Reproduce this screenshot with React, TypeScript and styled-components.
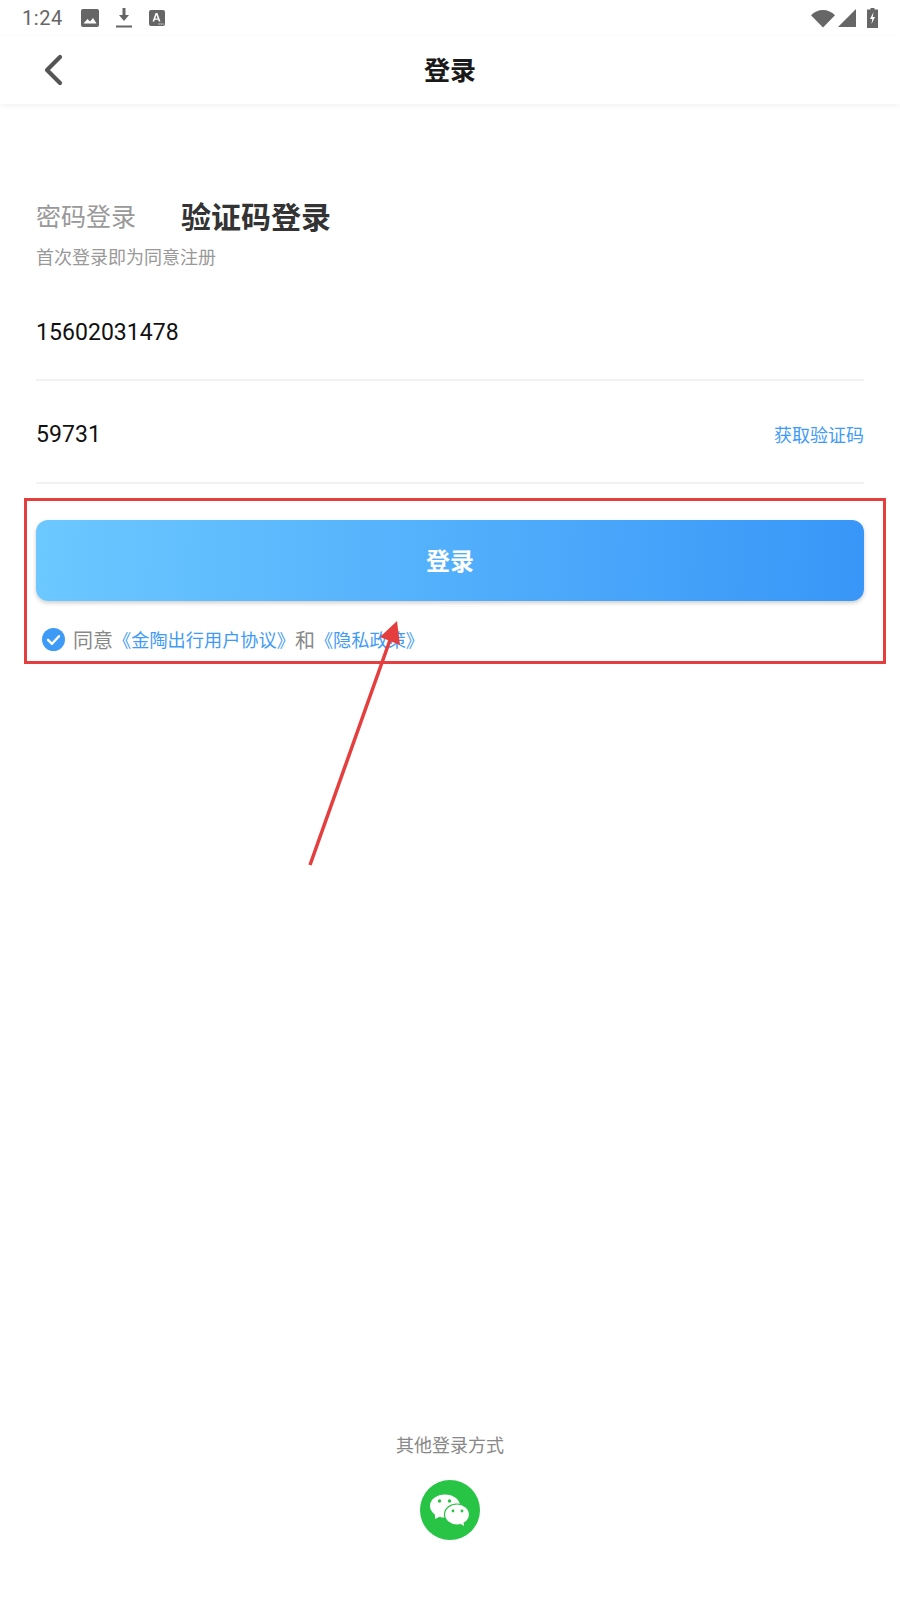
import styled, { createGlobalStyle } from 'styled-components';

const GlobalStyle = createGlobalStyle`
  html, body {
    margin: 0;
    padding: 0;
    background: #fff;
  }
  * {
    box-sizing: border-box;
  }
`;

const cjk = `Roboto, "Noto Sans CJK SC", sans-serif`;
const annotationRed = '#e53e3e';

const Page = styled.div`
  position: relative;
  width: 900px;
  height: 1600px;
  display: flex;
  flex-direction: column;
  overflow: hidden;
  background: #fff;
  font-family: ${cjk};
`;

const StatusBar = styled.div`
  height: 36px;
  padding: 0 22px;
  display: flex;
  align-items: center;
  color: #666;
`;

const Time = styled.span`
  font-size: 20px;
  letter-spacing: 0.6px;
  width: 59px;
`;

const StatusIcons = styled.div<{ $gap: number }>`
  display: flex;
  align-items: center;
  gap: ${(p) => p.$gap}px;
`;

const BatteryIcon = styled.svg`
  margin-left: 8px;
`;

const Spacer = styled.div`
  flex: 1;
`;

const NavBar = styled.header`
  height: 68px;
  padding-bottom: 3px;
  position: relative;
  display: flex;
  align-items: center;
  justify-content: center;
  box-shadow: 0 2px 6px rgba(0, 0, 0, 0.05);
`;

const BackButton = styled.button`
  position: absolute;
  left: 40px;
  top: 17px;
  padding: 0;
  border: 0;
  background: none;
  display: flex;
`;

const NavTitle = styled.h1`
  margin: 0;
  font-size: 26px;
  font-weight: 700;
  color: #1a1a1a;
`;

const Content = styled.main`
  flex: 1;
  padding: 93px 36px 0;
  display: flex;
  flex-direction: column;
`;

const Tabs = styled.div`
  display: flex;
  align-items: center;
  height: 36px;
  gap: 45px;
`;

const Tab = styled.span<{ $active?: boolean }>`
  font-size: ${(p) => (p.$active ? 30 : 25)}px;
  font-weight: ${(p) => (p.$active ? 700 : 400)};
  color: ${(p) => (p.$active ? '#333' : '#999')};
`;

const Hint = styled.p`
  margin: 12px 0 0;
  font-size: 18px;
  line-height: 26px;
  color: #999;
`;

const Field = styled.div`
  height: 103px;
  display: flex;
  align-items: center;
  justify-content: space-between;
  border-bottom: 2px solid #f2f2f2;
  padding-top: 4px;
`;

const FirstField = styled(Field)`
  margin-top: 10px;
  height: 100px;
  padding-top: 3px;
`;

const FieldValue = styled.span`
  font-size: 23px;
  letter-spacing: 0.05px;
  margin-top: 2px;
  color: #111;
`;

const CodeLink = styled.a`
  font-size: 18px;
  color: #3f9bf7;
`;

const SubmitButton = styled.button`
  margin-top: 36px;
  height: 81px;
  padding: 0 0 2px;
  border: 0;
  border-radius: 12px;
  background: linear-gradient(92deg, #6cc8ff 0%, #3896f8 100%);
  box-shadow: 0 2px 4px rgba(0, 0, 0, 0.2);
  color: #fff;
  font-family: inherit;
  font-size: 24px;
  font-weight: 700;
`;

const Agreement = styled.div`
  margin-top: 23px;
  padding-left: 6px;
  height: 30px;
  display: flex;
  align-items: center;
  font-size: 20px;
  color: #888;
`;

const CheckIcon = styled.svg`
  margin-right: 8px;
  flex: none;
`;

const PolicyLink = styled.a`
  font-size: 18.2px;
  color: #3f9bf7;
`;

const Footer = styled.footer`
  height: 167px;
  display: flex;
  flex-direction: column;
  align-items: center;
`;

const FooterLabel = styled.span`
  font-size: 18px;
  line-height: 26px;
  color: #888;
`;

const WechatButton = styled.button`
  margin-top: 21px;
  width: 60px;
  height: 60px;
  padding: 0;
  border: 0;
  border-radius: 50%;
  background: #28c445;
  display: flex;
`;

// annotation drawn on top of the screenshot
const HighlightBox = styled.div`
  position: absolute;
  left: 24px;
  top: 498px;
  width: 862px;
  height: 166px;
  border: 3px solid ${annotationRed};
  pointer-events: none;
`;

const Arrow = styled.svg`
  position: absolute;
  left: 0;
  top: 0;
  pointer-events: none;
`;

export default function App() {
  return (
    <Page>
      <GlobalStyle />
      <StatusBar>
        <Time>1:24</Time>
        <StatusIcons $gap={17}>
          <svg width="18" height="18" viewBox="0 0 18 18">
            <rect width="18" height="18" rx="2" fill="#666" />
            <path d="M2.5 14.5 6.5 10l2.5 2.5L12 9l3.5 5.5Z" fill="#fff" />
          </svg>
          <svg width="16" height="20" viewBox="0 0 16 20">
            <path d="M6.5 0h3v7H13l-5 6-5-6h3.5Z" fill="#666" />
            <rect y="17.5" width="16" height="2" fill="#666" />
          </svg>
          <svg width="16" height="16" viewBox="0 0 16 16">
            <rect width="16" height="16" rx="2" fill="#666" />
            <path d="M3.5 11.5 6.6 3h1.800l3.100 8.500H9.800l-.6-1.800H5.800l-.6 1.800Zm2.800-3.100h2.400L7.500 5Z" fill="#fff" />
            <path d="M9.500 13.500h1.200v1H9.500Zm2 0h1.200v1h-1.200Zm2 0h1v1h-1Z" fill="#fff" />
          </svg>
        </StatusIcons>
        <Spacer />
        <StatusIcons $gap={3}>
          <svg width="24" height="19" viewBox="0 0 24 19">
            <path d="M0 6.200C3.200 3 7.400 1 12 1s8.800 2 12 5.200L12 18.500Z" fill="#666" />
          </svg>
          <svg width="18" height="18" viewBox="0 0 18 18">
            <path d="M0 18 18 0v18Z" fill="#666" />
          </svg>
          <BatteryIcon width="11" height="20" viewBox="0 0 11 20">
            <path d="M3.500 0h4v1.500H11V20H0V1.500h3.500Z" fill="#666" />
            <path d="M6.500 4 3 11h2.300l-.8 5L8 9H5.700Z" fill="#fff" />
          </BatteryIcon>
        </StatusIcons>
      </StatusBar>

      <NavBar>
        <BackButton aria-label="返回">
          <svg width="26" height="34" viewBox="0 0 26 34">
            <path d="M20 4 7 17l13 13" fill="none" stroke="#555" strokeWidth="4.200" strokeLinecap="round" strokeLinejoin="round" />
          </svg>
        </BackButton>
        <NavTitle>登录</NavTitle>
      </NavBar>

      <Content>
        <Tabs>
          <Tab>密码登录</Tab>
          <Tab $active>验证码登录</Tab>
        </Tabs>
        <Hint>首次登录即为同意注册</Hint>
        <FirstField>
          <FieldValue>15602031478</FieldValue>
        </FirstField>
        <Field>
          <FieldValue>59731</FieldValue>
          <CodeLink>获取验证码</CodeLink>
        </Field>
        <SubmitButton>登录</SubmitButton>
        <Agreement>
          <CheckIcon width="23" height="23" viewBox="0 0 23 23">
            <circle cx="11.500" cy="11.500" r="11.500" fill="#3d9af6" />
            <path d="m6 11.800 4 4 7-7.600" fill="none" stroke="#fff" strokeWidth="2.400" strokeLinecap="round" strokeLinejoin="round" />
          </CheckIcon>
          同意
          <PolicyLink>《金陶出行用户协议》</PolicyLink>
          和
          <PolicyLink>《隐私政策》</PolicyLink>
        </Agreement>
      </Content>

      <Footer>
        <FooterLabel>其他登录方式</FooterLabel>
        <WechatButton aria-label="微信登录">
          <svg width="60" height="60" viewBox="0 0 60 60">
            <ellipse cx="25" cy="26" rx="15" ry="11.500" fill="#fff" />
            <path d="M15 34v5l6-3Z" fill="#fff" />
            <circle cx="19.500" cy="21" r="1.700" fill="#28c445" />
            <circle cx="29.500" cy="21" r="1.700" fill="#28c445" />
            <ellipse cx="37" cy="34.500" rx="12.500" ry="10.500" fill="#fff" stroke="#28c445" strokeWidth="1.200" />
            <path d="M40 43.500l4 2.500-.5-4Z" fill="#fff" />
            <circle cx="33" cy="31" r="1.400" fill="#28c445" />
            <circle cx="42" cy="31" r="1.400" fill="#28c445" />
          </svg>
        </WechatButton>
      </Footer>

      <HighlightBox />
      <Arrow width="900" height="1600" viewBox="0 0 900 1600">
        <path d="M310 865 390 640" stroke={annotationRed} strokeWidth="3.500" fill="none" />
        <path d="M397 621 380 637 400 645Z" fill={annotationRed} />
      </Arrow>
    </Page>
  );
}
